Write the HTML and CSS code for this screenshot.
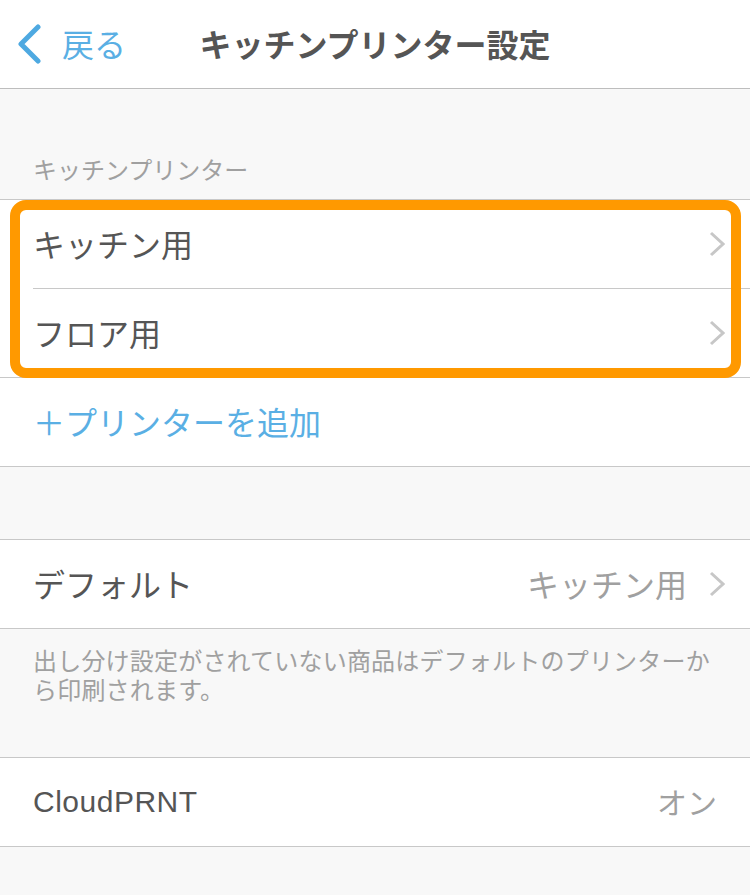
FILE: index.html
```html
<!DOCTYPE html>
<html lang="ja">
<head>
    <meta charset="UTF-8">
    <meta name="viewport" content="width=device-width, initial-scale=1.0">
    <title>キッチンプリンター設定</title>
    <link rel="stylesheet" href="styles.css">
</head>
<body>
    <div class="nav">
        <a class="back" href="#">
            <svg class="back-icon" width="26" height="40" viewBox="0 0 26 40">
                <polyline points="21,3 4,20 21,37" fill="none" stroke="#4ea9e1" stroke-width="5" stroke-linecap="round" stroke-linejoin="round"/>
            </svg>
            <span>戻る</span>
        </a>
        <div class="nav-title">キッチンプリンター設定</div>
        <div></div>
    </div>

    <div class="section-label">キッチンプリンター</div>

    <div class="group">
        <div class="highlight">
            <div class="row inset">
                <span class="row-label">キッチン用</span>
                <svg class="chevron" width="16" height="26" viewBox="0 0 16 26"><polyline points="2,2 14,13 2,24" fill="none" stroke="#c7c7c7" stroke-width="3"/></svg>
            </div>
            <div class="row">
                <span class="row-label">フロア用</span>
                <svg class="chevron" width="16" height="26" viewBox="0 0 16 26"><polyline points="2,2 14,13 2,24" fill="none" stroke="#c7c7c7" stroke-width="3"/></svg>
            </div>
        </div>
        <div class="row">
            <span class="row-label add">＋プリンターを追加</span>
        </div>
    </div>

    <div class="spacer"></div>

    <div class="group">
        <div class="row">
            <span class="row-label">デフォルト</span>
            <span class="row-value">キッチン用</span>
            <svg class="chevron" width="16" height="26" viewBox="0 0 16 26"><polyline points="2,2 14,13 2,24" fill="none" stroke="#c7c7c7" stroke-width="3"/></svg>
        </div>
    </div>

    <div class="note">出し分け設定がされていない商品はデフォルトのプリンターから印刷されます。</div>

    <div class="group">
        <div class="row plain">
            <span class="row-label latin">CloudPRNT</span>
            <span class="row-value small">オン</span>
        </div>
    </div>
</body>
</html>
```

FILE: styles.css
```css
body {
    margin: 0;
    padding: 0;
    background-color: #f8f8f8;
    font-family: "Liberation Sans", "Noto Sans CJK JP", sans-serif;
    color: #555;
}
.nav {
    display: grid;
    grid-template-columns: 1fr auto 1fr;
    align-items: center;
    height: 88px;
    background-color: #fff;
    border-bottom: 1px solid #bdbdbd;
}
.back {
    display: flex;
    align-items: center;
    gap: 19px;
    padding-left: 17px;
    color: #5aafe4;
    font-size: 32px;
    text-decoration: none;
}
.back span {
    margin-top: -2px;
}
.nav-title {
    font-size: 32px;
    font-weight: bold;
    color: #555;
    margin-top: -2px;
}
.section-label {
    padding: 64px 33px 10px;
    font-size: 24px;
    line-height: 36px;
    color: #a0a0a0;
}
.group {
    background-color: #fff;
    border-top: 1px solid #c8c8c8;
}
.highlight {
    position: relative;
}
.highlight::after {
    content: "";
    position: absolute;
    top: 0;
    bottom: 0;
    left: 10px;
    right: 9px;
    border: 10px solid #ff9900;
    border-radius: 16px;
    pointer-events: none;
}
.row {
    display: flex;
    align-items: center;
    height: 88px;
    padding: 0 25px 0 33px;
    border-bottom: 1px solid #c8c8c8;
}
.row.inset {
    margin-left: 33px;
    padding-left: 0;
}
.row.plain {
    padding-right: 33px;
}
.row-label {
    flex: 1;
    font-size: 32px;
    color: #555;
    margin-top: -3px;
}
.row-label.add {
    color: #5aafe4;
}
.row-label.latin {
    font-size: 30px;
    letter-spacing: 0.5px;
    margin-top: -1px;
}
.row-value {
    font-size: 32px;
    color: #a0a0a0;
    margin-top: -3px;
}
.row-value.small {
    font-size: 30px;
}
.chevron {
    margin-left: 22px;
}
.spacer {
    height: 72px;
}
.note {
    height: 58px;
    padding: 18px 33px 52px;
    font-size: 24px;
    line-height: 29px;
    letter-spacing: 0.2px;
    color: #a0a0a0;
}
```
